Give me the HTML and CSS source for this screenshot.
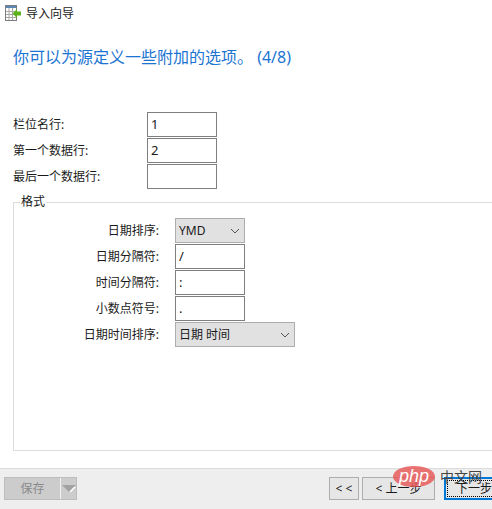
FILE: index.html
```html
<!DOCTYPE html>
<html lang="zh">
<head>
<meta charset="utf-8">
<title>导入向导</title>
<link rel="stylesheet" href="styles.css">
</head>
<body>
<div class="window">
  <div class="titlebar">
    <svg class="app-icon" width="17" height="17" viewBox="0 0 17 17">
      <rect x="0.5" y="0.5" width="11" height="15" fill="#fff" stroke="#7d7d7d"/>
      <rect x="1" y="1" width="10" height="2" fill="#5b87b5"/>
      <path d="M1 6.500h10M1 9.500h10M1 12.500h10M4 3v12M7.500 3v12" stroke="#a9a9a9" fill="none"/>
      <path d="M16 6.500H12V4L7.500 8.500l4.500 4.500V10.500H16z" fill="#5db31a"/>
    </svg>
    <span class="title-text">导入向导</span>
  </div>
  <h1 class="heading">你可以为源定义一些附加的选项。 (4/8)</h1>
  <div class="top-form">
    <div class="row"><label class="top-label">栏位名行:</label><div class="input">1</div></div>
    <div class="row"><label class="top-label">第一个数据行:</label><div class="input">2</div></div>
    <div class="row"><label class="top-label">最后一个数据行:</label><div class="input"></div></div>
  </div>
  <fieldset class="group">
    <legend class="group-title">格式</legend>
    <div class="row"><label class="fmt-label">日期排序:</label><div class="select"><span>YMD</span><svg class="chev" width="10" height="6" viewBox="0 0 10 6"><path d="M1 1l4 4 4-4" fill="none" stroke="#555"/></svg></div></div>
    <div class="row"><label class="fmt-label">日期分隔符:</label><div class="input">/</div></div>
    <div class="row"><label class="fmt-label">时间分隔符:</label><div class="input">:</div></div>
    <div class="row"><label class="fmt-label">小数点符号:</label><div class="input">.</div></div>
    <div class="row"><label class="fmt-label">日期时间排序:</label><div class="select wide"><span>日期 时间</span><svg class="chev" width="10" height="6" viewBox="0 0 10 6"><path d="M1 1l4 4 4-4" fill="none" stroke="#555"/></svg></div></div>
  </fieldset>
  <div class="footer">
    <div class="save">
      <span class="save-main">保存</span>
      <span class="save-arrow"><svg width="14" height="8" viewBox="0 0 14 8"><path d="M0 0h14L7 7z" fill="#a2a2a2"/><path d="M8 7l5-5" stroke="#fff" stroke-width="1.500"/></svg></span>
    </div>
    <div class="nav">
      <div class="btn first">&lt; &lt;</div>
      <div class="btn prev">&lt; 上一步</div>
      <div class="btn next"><span class="next-inner">下一步</span></div>
    </div>
  </div>
  <div class="watermark">
    <span class="wm-oval">php</span>
    <span class="wm-text">中文网</span>
  </div>
</div>
</body>
</html>
```

FILE: styles.css
```css
* { box-sizing: border-box; }
html, body { margin: 0; padding: 0; background: #fff; overflow: hidden; }
body { width: 492px; height: 509px; font-family: "Noto Sans", "Noto Sans CJK SC", sans-serif; font-size: 12px; color: #1a1a1a; }
.window { position: relative; width: 492px; height: 509px; display: flex; flex-direction: column; overflow: hidden; }
.titlebar { height: 28px; display: flex; align-items: center; gap: 4px; padding: 0 0 1px 5px; flex: none; }
.app-icon { flex: none; }
.title-text { font-size: 12px; line-height: 16px; }
.heading { margin: 16px 0 0 13px; font-size: 16px; line-height: 26px; height: 26px; font-weight: 400; color: #1b74d2; white-space: pre; flex: none; }
.top-form { margin: 42px 0 0 13px; display: flex; flex-direction: column; gap: 1px; flex: none; }
.row { display: flex; align-items: center; height: 25px; }
.top-label { width: 134px; line-height: 16px; padding-top: 1px; }
.fmt-label { width: 145px; margin-right: 16px; text-align: right; line-height: 16px; padding-top: 1px; }
.input { width: 70px; height: 25px; border: 1px solid #7f7f7f; background: #fff; padding: 0 3px; font-size: 13px; line-height: 22px; }
.select { width: 70px; height: 25px; border: 1px solid #adadad; background: #e1e1e1; padding: 0 4px 0 3px; font-size: 12px; line-height: 22px; display: flex; align-items: center; justify-content: space-between; }
.select.wide { width: 120px; }
.chev { flex: none; }
.group { margin: 6px 0 0 13px; padding: 9px 0 0 0; width: 520px; height: 256px; border: 1px solid #dcdcdc; border-right: 0; min-width: 0; display: flex; flex-direction: column; gap: 1px; flex: none; }
.group-title { margin-left: 6px; padding: 0 1px; font-size: 12px; line-height: 14px; }
.footer { margin-top: 17px; height: 41px; flex: none; background: #eeeeee; border-top: 1px solid #dcdcdc; display: flex; align-items: flex-start; justify-content: space-between; padding: 8px 0 0 4px; }
.save { width: 73px; height: 23px; display: flex; background: #cccccc; border: 1px solid #bdbdbd; color: #8a8a8a; font-size: 12px; }
.save-main { width: 56px; line-height: 21px; text-align: center; border-right: 1px solid #f2f2f2; }
.save-arrow { flex: 1; display: flex; align-items: center; justify-content: center; }
.nav { display: flex; width: 163px; gap: 3px; }
.btn { height: 23px; border: 1px solid #adadad; background: #e6e6e6; text-align: center; line-height: 21px; font-size: 12px; flex: none; }
.first { width: 30px; }
.prev { width: 73px; }
.next { width: 60px; margin-left: 6px; border: 2px solid #0078d7; text-align: left; padding: 1px 0 1px 1px; margin-right: -12px; }
.next-inner { display: block; height: 17px; border: 1px dotted #000; border-right: 0; line-height: 15px; padding-left: 8px; white-space: nowrap; }
.watermark { position: absolute; left: 393px; top: 466px; display: flex; align-items: flex-start; gap: 5px; }
.wm-oval { width: 42px; height: 21px; border-radius: 50%; background: rgba(230, 90, 90, 0.85); color: #fff; font-family: "Liberation Sans", sans-serif; font-style: italic; font-size: 18px; line-height: 20px; text-align: center; }
.wm-text { margin-top: 3px; font-size: 14px; line-height: 15px; color: #444; font-family: "Noto Sans CJK SC", sans-serif; }
```
